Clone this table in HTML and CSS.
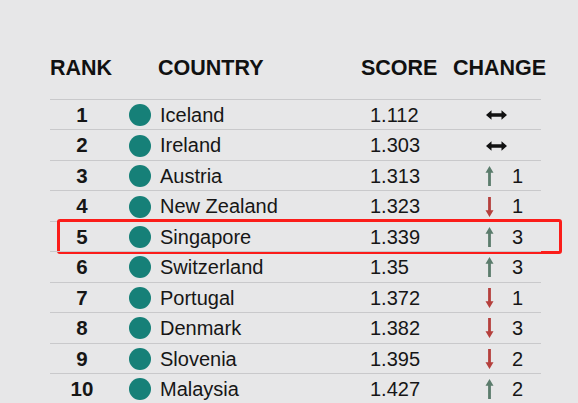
FILE: index.html
```html
<!DOCTYPE html>
<html>
<head>
<meta charset="utf-8">
<link rel="stylesheet" href="styles.css">
</head>
<body>
<div class="table">
  <div class="head">
    <div class="h-rank">RANK</div>
    <div class="h-country">COUNTRY</div>
    <div class="h-score">SCORE</div>
    <div class="h-change">CHANGE</div>
  </div>

  <div class="row">
    <div class="rank">1</div>
    <div class="country"><span class="dot"></span>Iceland</div>
    <div class="score">1.112</div>
    <div class="change"><span class="ico"><svg class="both" viewBox="0 0 21 10"><path d="M0 5 L5.5 0.3 L5.5 3.3 L15.5 3.3 L15.5 0.3 L21 5 L15.5 9.7 L15.5 6.7 L5.5 6.7 L5.5 9.7 Z" fill="#111"/></svg></span></div>
  </div>
  <div class="row">
    <div class="rank">2</div>
    <div class="country"><span class="dot"></span>Ireland</div>
    <div class="score">1.303</div>
    <div class="change"><span class="ico"><svg class="both" viewBox="0 0 21 10"><path d="M0 5 L5.5 0.3 L5.5 3.3 L15.5 3.3 L15.5 0.3 L21 5 L15.5 9.7 L15.5 6.7 L5.5 6.7 L5.5 9.7 Z" fill="#111"/></svg></span></div>
  </div>
  <div class="row">
    <div class="rank">3</div>
    <div class="country"><span class="dot"></span>Austria</div>
    <div class="score">1.313</div>
    <div class="change"><span class="ico"><svg class="arrow" viewBox="0 0 9 20"><path d="M4.5 0 L8.5 6.8 L5.9 6.8 L5.9 20 L3.1 20 L3.1 6.8 L0.5 6.8 Z" fill="#5b7c6c"/></svg></span><span class="num">1</span></div>
  </div>
  <div class="row">
    <div class="rank">4</div>
    <div class="country"><span class="dot"></span>New Zealand</div>
    <div class="score">1.323</div>
    <div class="change"><span class="ico"><svg class="arrow" viewBox="0 0 9 20"><path d="M4.5 20 L8.5 13.2 L5.9 13.2 L5.9 0 L3.1 0 L3.1 13.2 L0.5 13.2 Z" fill="#b5403d"/></svg></span><span class="num">1</span></div>
  </div>
  <div class="row hl">
    <div class="rank">5</div>
    <div class="country"><span class="dot"></span>Singapore</div>
    <div class="score">1.339</div>
    <div class="change"><span class="ico"><svg class="arrow" viewBox="0 0 9 20"><path d="M4.5 0 L8.5 6.8 L5.9 6.8 L5.9 20 L3.1 20 L3.1 6.8 L0.5 6.8 Z" fill="#5b7c6c"/></svg></span><span class="num">3</span></div>
    <div class="box"></div>
  </div>
  <div class="row">
    <div class="rank">6</div>
    <div class="country"><span class="dot"></span>Switzerland</div>
    <div class="score">1.35</div>
    <div class="change"><span class="ico"><svg class="arrow" viewBox="0 0 9 20"><path d="M4.5 0 L8.5 6.8 L5.9 6.8 L5.9 20 L3.1 20 L3.1 6.8 L0.5 6.8 Z" fill="#5b7c6c"/></svg></span><span class="num">3</span></div>
  </div>
  <div class="row">
    <div class="rank">7</div>
    <div class="country"><span class="dot"></span>Portugal</div>
    <div class="score">1.372</div>
    <div class="change"><span class="ico"><svg class="arrow" viewBox="0 0 9 20"><path d="M4.5 20 L8.5 13.2 L5.9 13.2 L5.9 0 L3.1 0 L3.1 13.2 L0.5 13.2 Z" fill="#b5403d"/></svg></span><span class="num">1</span></div>
  </div>
  <div class="row">
    <div class="rank">8</div>
    <div class="country"><span class="dot"></span>Denmark</div>
    <div class="score">1.382</div>
    <div class="change"><span class="ico"><svg class="arrow" viewBox="0 0 9 20"><path d="M4.5 20 L8.5 13.2 L5.9 13.2 L5.9 0 L3.1 0 L3.1 13.2 L0.5 13.2 Z" fill="#b5403d"/></svg></span><span class="num">3</span></div>
  </div>
  <div class="row">
    <div class="rank">9</div>
    <div class="country"><span class="dot"></span>Slovenia</div>
    <div class="score">1.395</div>
    <div class="change"><span class="ico"><svg class="arrow" viewBox="0 0 9 20"><path d="M4.5 20 L8.5 13.2 L5.9 13.2 L5.9 0 L3.1 0 L3.1 13.2 L0.5 13.2 Z" fill="#b5403d"/></svg></span><span class="num">2</span></div>
  </div>
  <div class="row">
    <div class="rank">10</div>
    <div class="country"><span class="dot"></span>Malaysia</div>
    <div class="score">1.427</div>
    <div class="change"><span class="ico"><svg class="arrow" viewBox="0 0 9 20"><path d="M4.5 0 L8.5 6.8 L5.9 6.8 L5.9 20 L3.1 20 L3.1 6.8 L0.5 6.8 Z" fill="#5b7c6c"/></svg></span><span class="num">2</span></div>
  </div>
</div>
</body>
</html>
```
FILE: styles.css
```css
html, body {
  margin: 0;
  padding: 0;
  background: #e7e7e8;
  overflow: hidden;
}
body {
  font-family: "Liberation Sans", Arial, sans-serif;
  color: #161616;
}
.table {
  margin-left: 50px;
  width: 491px;
  padding-top: 56px;
}
.head {
  display: grid;
  grid-template-columns: 64px 247px 92px 94px;
  width: 497px;
  font-weight: bold;
  font-size: 21.5px;
  line-height: 24px;
  color: #111;
  margin-bottom: 19px;
}
.h-country { padding-left: 44px; }
.row {
  position: relative;
  display: grid;
  grid-template-columns: 64px 256px 83px 88px;
  align-items: center;
  height: 28.44px;
  padding-top: 1px;
  border-top: 1px solid #c9c9cb;
  font-size: 20px;
  line-height: 28.44px;
}
.rank {
  text-align: center;
  font-weight: bold;
  font-size: 20.5px;
}
.country {
  display: flex;
  align-items: center;
  padding-left: 15px;
}
.dot {
  width: 22px;
  height: 22px;
  border-radius: 50%;
  background: #168078;
  margin-right: 9px;
  flex: none;
}
.change {
  display: flex;
  align-items: center;
  padding-left: 32px;
}
.ico {
  width: 22px;
  height: 20px;
  display: flex;
  align-items: center;
}
.arrow {
  width: 9px;
  height: 20px;
  display: block;
}
.both {
  width: 21px;
  height: 10px;
  display: block;
  margin-left: 1px;
}
.num {
  margin-left: 5px;
}
.box {
  position: absolute;
  left: 7px;
  top: -3px;
  width: 505px;
  height: 35px;
  box-sizing: border-box;
  border: 3px solid #fb1d1a;
  border-radius: 3px;
}
```
